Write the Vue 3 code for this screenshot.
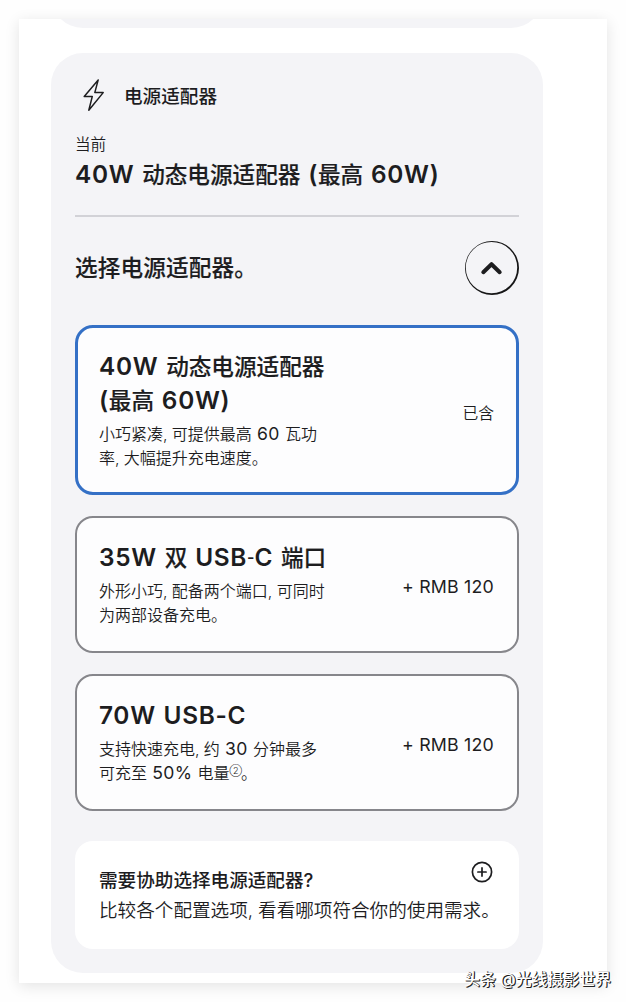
<script setup>
const options = [
  {
    id: 'w40',
    selected: true,
    title: ['40W 动态电源适配器', '(最高 60W)'],
    desc: ['小巧紧凑,可提供最高 60 瓦功', '率,大幅提升充电速度。'],
    price: '已含',
    cjkPrice: true,
  },
  {
    id: 'w35',
    title: ['35W 双 USB‑C 端口'],
    desc: ['外形小巧,配备两个端口,可同时', '为两部设备充电。'],
    price: '+ RMB 120',
  },
  {
    id: 'w70',
    title: ['70W USB-C'],
    desc: ['支持快速充电,约 30 分钟最多', '可充至 50% 电量②。'],
    price: '+ RMB 120',
  },
]

// Splits a line so that Latin runs, commas and note marks can be styled apart.
function runs(line) {
  return line
    .split(/(,|②|‑|[A-Za-z0-9%()+\- ]+)/)
    .filter(Boolean)
    .map((text) => {
      if (text === ',') return { text, kind: 'comma' }
      if (text === '②') return { text, kind: 'note' }
      if (text === '‑') return { text, kind: 'hyphen' }
      return { text, kind: /^[\x20-\x7e]+$/.test(text) ? 'latin' : 'cjk' }
    })
}
</script>

<template>
  <div class="page">
    <div class="sheet">
      <div class="previous"></div>
      <section class="panel">
        <header class="head">
          <svg class="bolt" viewBox="0 0 24 34" fill="none" stroke="#1d1d1f" stroke-width="1.5" stroke-linejoin="round">
            <path d="M16.2 1.9 2.2 18.4h8.1L6.8 32.2 21.2 14.6h-8.4z" />
          </svg>
          <h2>电源适配器</h2>
        </header>
        <p class="current-label">当前</p>
        <p class="current title"><span v-for="(r, i) in runs('40W 动态电源适配器 (最高 60W)')" :key="i" :class="r.kind">{{ r.text }}</span></p>
        <div class="choose">
          <h3 class="title">选择电源适配器。</h3>
          <button class="toggle" aria-label="收起">
            <svg viewBox="0 0 54 54" fill="none" stroke="#1d1d1f">
              <path fill="#161617" stroke="none" fill-rule="evenodd" d="M27 0a27 27 0 1 0 0 54a27 27 0 1 0 0-54zM26.5 .9a25.7 25.7 0 1 1 0 51.4a25.7 25.7 0 1 1 0-51.4z" />
              <path d="m18.3 31.2 8.2-8 8.2 8" stroke-width="4" stroke-linecap="round" stroke-linejoin="round" />
            </svg>
          </button>
        </div>
        <div class="options">
          <div v-for="o in options" :key="o.id" class="option" :class="{ selected: o.selected }">
            <div class="info">
              <div v-for="(l, i) in o.title" :key="'t' + i" class="title line"><span v-for="(r, j) in runs(l)" :key="j" :class="r.kind">{{ r.text }}</span></div>
              <div class="desc">
                <div v-for="(l, i) in o.desc" :key="'d' + i" class="line"><span v-for="(r, j) in runs(l)" :key="j" :class="r.kind">{{ r.text }}</span></div>
              </div>
            </div>
            <div class="price" :class="{ small: o.cjkPrice }">{{ o.price }}</div>
          </div>
        </div>
        <div class="help">
          <div class="help-text">
            <h4>需要协助选择电源适配器?</h4>
            <p>比较各个配置选项<span class="comma">,</span>看看哪项符合你的使用需求。</p>
          </div>
          <svg class="plus" viewBox="0 0 22 22" fill="none" stroke="#1d1d1f" stroke-width="1.7" stroke-linecap="round">
            <circle cx="11" cy="11" r="9.6" />
            <path d="M11 6.9v8.2M6.9 11h8.2" />
          </svg>
        </div>
      </section>
    </div>
    <div class="credit">头条 @光线摄影世界</div>
  </div>
</template>

<style>
body {
  background: #fefefe;
}
</style>

<style scoped>
.page {
  position: relative;
  box-sizing: border-box;
  width: 626px;
  height: 1002px;
  padding: 19px;
  overflow: hidden;
  color: #1d1d1f;
  font-family: Inter, "Noto Sans CJK SC", sans-serif;
}
.page * {
  box-sizing: border-box;
}
h2, h3, h4, p {
  margin: 0;
}
.sheet {
  width: 588px;
  height: 964px;
  padding: 0 64px 0 32px;
  background: #fff;
  box-shadow: 0 3px 14px rgba(0, 0, 0, 0.11);
  overflow: hidden;
}
.previous {
  height: 40px;
  margin-top: -31px;
  border-radius: 0 0 32px 32px;
  background: #f4f4f7;
}
.panel {
  height: 920px;
  margin-top: 25px;
  padding: 24px;
  border-radius: 32px;
  background: #f4f4f7;
}
.head {
  display: flex;
  align-items: center;
  height: 36px;
  padding-left: 7px;
}
.bolt {
  width: 24px;
  height: 34px;
}
h2 {
  margin: 1px 0 0 18px;
  font-size: 18.6px;
  font-weight: 500;
  line-height: 28px;
}
.current-label {
  margin-top: 20px;
  font-size: 15.6px;
  font-weight: 350;
  line-height: 24px;
}
.title {
  font-size: 22.6px;
  font-weight: 500;
  line-height: 34px;
  white-space: pre;
  -webkit-text-stroke: 0.15px currentColor;
}
.title .latin,
.title .hyphen {
  font-size: 24.4px;
  font-weight: 580;
  letter-spacing: 0.7px;
  word-spacing: 1px;
  -webkit-text-stroke: 0;
}
.title .hyphen {
  font-size: 16px;
  letter-spacing: 0.5px;
  position: relative;
  top: -3px;
}
.current {
  height: 60px;
  border-bottom: 2px solid #d2d2d7;
}
.choose {
  display: flex;
  justify-content: space-between;
  align-items: center;
  height: 54px;
  margin-top: 24px;
}
.choose .title {
  letter-spacing: 0.15px;
}
.toggle {
  width: 54px;
  height: 54px;
  padding: 0;
  border: 0;
  background: none;
}
.toggle svg {
  display: block;
  width: 54px;
  height: 54px;
}
.options {
  display: grid;
  grid-template-rows: 170px 137px 137px;
  gap: 21px;
  margin-top: 30px;
}
.option {
  display: flex;
  justify-content: space-between;
  align-items: center;
  padding: 0 23px 0 22px;
  border: 2px solid #86868b;
  border-radius: 18px;
  background: #fdfdfe;
}
.option.selected {
  padding: 0 22px 0 21px;
  border: 3px solid #3470c6;
}
.info {
  margin-bottom: 2px;
}
.desc {
  margin-top: 5px;
  font-size: 16px;
  font-weight: 350;
  line-height: 24px;
}
.line {
  white-space: pre;
}
.title.line {
  height: 34px;
}
.desc .line {
  height: 24px;
}
.desc .latin {
  font-size: 17.6px;
  font-weight: 370;
  letter-spacing: 0.3px;
}
.comma {
  margin-right: 0.27em;
}
.note {
  font-size: 9px;
  font-weight: 300;
  line-height: 1;
  letter-spacing: -1px;
  position: relative;
  top: -5px;
}
.price {
  margin-top: 5px;
  font-size: 17.8px;
  font-weight: 370;
  line-height: 24px;
  letter-spacing: 0.2px;
  white-space: pre;
}
.price.small {
  margin-top: 7px;
  font-size: 15.8px;
  font-weight: 350;
  letter-spacing: 0;
}
.help {
  display: flex;
  justify-content: space-between;
  height: 108px;
  margin-top: 30px;
  padding: 24px;
  border-radius: 18px;
  background: #fff;
}
.help-text {
  width: 372px;
  white-space: nowrap;
}
h4 {
  font-size: 18.6px;
  font-weight: 500;
  line-height: 30px;
}
.help p {
  font-size: 18.6px;
  font-weight: 350;
  line-height: 30px;
}
.plus {
  flex: none;
  width: 22px;
  height: 22px;
  margin: -4.5px 2px 0 0;
}
.credit {
  position: absolute;
  left: 464px;
  top: 968px;
  color: #fff;
  font-size: 15.9px;
  font-weight: 500;
  line-height: 24px;
  white-space: nowrap;
  text-shadow: 1px 1px 0 #222, 1px 0 0 #333;
}
</style>
